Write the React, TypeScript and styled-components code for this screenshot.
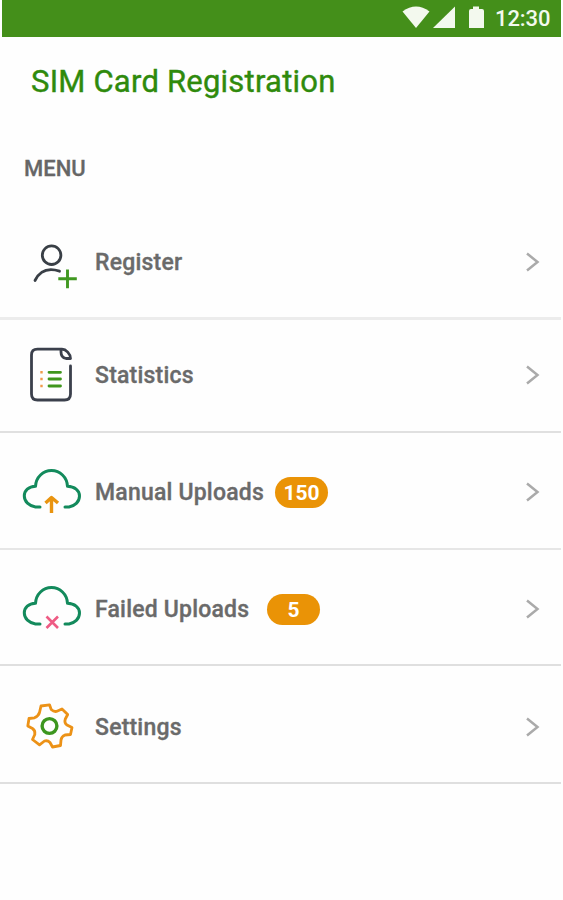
import React from "react";
import styled, { createGlobalStyle } from "styled-components";

const GlobalStyle = createGlobalStyle`
  * { box-sizing: border-box; }
  body { margin: 0; background: #fefefe; font-family: Roboto, "Liberation Sans", sans-serif; }
`;

const Screen = styled.main`
  width: 563px;
  height: 900px;
  display: flex;
  flex-direction: column;
  overflow: hidden;
`;

const StatusBar = styled.header`
  height: 37px;
  flex: none;
  margin: 0 2px;
  padding-right: 10px;
  background: #448f1a;
  display: flex;
  align-items: center;
  justify-content: flex-end;
`;

const StatusIcons = styled.svg`
  width: 96px;
  height: 37px;
  fill: #f3f9ee;
`;

const Clock = styled.span`
  width: 56px;
  color: #f3f9ee;
  font-size: 22px;
  font-weight: 500;
  line-height: 36px;
  letter-spacing: -0.1px;
  white-space: nowrap;
`;

const Title = styled.h1`
  margin: 26px 0 0 31px;
  height: 38px;
  line-height: 38px;
  font-size: 31px;
  font-weight: 400;
  letter-spacing: 0.22px;
  color: #2f8a0c;
  white-space: nowrap;
  -webkit-text-stroke: 0.4px #2f8a0c;
`;

const Section = styled.h2`
  margin: 54px 0 0 24px;
  height: 28px;
  line-height: 28px;
  font-size: 22px;
  font-weight: 500;
  color: #666;
  -webkit-text-stroke: 0.3px #666;
`;

const Menu = styled.nav`
  margin-top: 22px;
  width: 561px;
  display: flex;
  flex-direction: column;
`;

const Row = styled.a<{ $height: number; $top: number; $line: number; $tone: string }>`
  height: ${(p) => p.$height}px;
  padding: ${(p) => p.$top}px 20px 0;
  border-bottom: ${(p) => p.$line}px solid ${(p) => p.$tone};
  display: flex;
  align-items: flex-start;
`;

const RowIcon = styled.svg`
  width: 64px;
  height: 64px;
  margin-right: 11px;
  flex: none;
  fill: none;
  stroke-linecap: round;
  stroke-linejoin: round;
`;

const Label = styled.span<{ $width: number }>`
  width: ${(p) => p.$width}px;
  line-height: 65px;
  font-size: 23px;
  font-weight: 500;
  letter-spacing: 0.2px;
  color: #6a6a6a;
  white-space: nowrap;
  -webkit-text-stroke: 0.35px #6a6a6a;
`;

const Badge = styled.span`
  width: 53px;
  height: 31px;
  margin-top: 17px;
  border-radius: 16px;
  background: #ea9306;
  color: #fff;
  font-size: 21px;
  font-weight: 700;
  line-height: 32px;
  text-align: center;
`;

const Chevron = styled.svg`
  width: 16px;
  height: 64px;
  margin-left: auto;
  fill: none;
  stroke: #aaa;
  stroke-width: 2.5;
`;

const Cloud = () => (
  <path
    stroke="#138a5c"
    strokeWidth="3"
    d="M20 47H15.5C9 46 4.300 41.500 4.300 36C4.300 30.500 8.500 26.500 15.500 26.300C16 17 23 10.600 31.500 10.600C40 10.600 47 17 47.500 26.300C54.500 26.500 59.500 30.500 59.500 36C59.500 42 54.500 46 49 47H45"
  />
);

const RegisterIcon = () => (
  <RowIcon viewBox="0 0 64 64">
    <g stroke="#393f46" strokeWidth="2.8">
      <circle cx="31.600" cy="25.200" r="9.300" />
      <path d="M15 50.500C20 40.500 29 37.800 39.500 41.200" />
    </g>
    <path stroke="#409820" strokeWidth="2.9" strokeLinecap="butt" d="M38.300 48.800H56.800M47.500 39.500V58.300" />
  </RowIcon>
);

const StatisticsIcon = () => (
  <RowIcon viewBox="0 0 64 64">
    <path
      stroke="#3b404c"
      strokeWidth="2.8"
      d="M50.500 23V51Q50.500 57 44.500 57H17.500Q11.500 57 11.500 51V12Q11.500 6.200 17.500 6.200H42C46 6.200 50.500 11 50.500 15.500H46Q41 14.500 41 9V6.500"
    />
    <path stroke="#3f961c" strokeWidth="2.8" d="M29 29.300H40.500M29 36H40.500M29 43H40.500" />
    <path stroke="#f09a4a" strokeWidth="2.400" strokeLinecap="butt" d="M20.300 29.300H22.700M20.300 36H22.700M20.300 43H22.700" />
  </RowIcon>
);

const UploadIcon = () => (
  <RowIcon viewBox="0 0 64 64">
    <Cloud />
    <path stroke="#e99410" strokeWidth="3.4" strokeLinecap="butt" d="M31.500 53V38M25.500 43L31.500 37.500L38 43" />
  </RowIcon>
);

const FailedIcon = () => (
  <RowIcon viewBox="0 0 64 64">
    <Cloud />
    <path stroke="#ee5b84" strokeWidth="2.6" strokeLinecap="butt" d="M26.500 39.500L38 51M38 39.500L26.500 51" />
  </RowIcon>
);

const SettingsIcon = () => (
  <RowIcon viewBox="0 0 64 64">
    <path
      stroke="#ec9217"
      strokeWidth="2.8"
      d="M21 11L29.500 9.800L31.200 14.500Q34.500 17.500 37.500 16L42 14L47.700 19.500L45.300 24Q44 28 47 30L52 32.500L50.500 39.500L45 40Q41.500 41.500 41 45L40.500 50.500L32.500 52L30 47.500Q27.500 45 24.500 46L19.500 49.800L12.500 44.500L14.800 39.500Q15.500 35.500 12.500 33.500L7.800 31L9 23.500L14.500 22.800Q18.500 21 19.500 17.500Z"
    />
    <circle cx="29.500" cy="31" r="7.400" stroke="#3d961f" strokeWidth="3.4" />
  </RowIcon>
);

type Item = {
  label: string;
  Icon: () => React.JSX.Element;
  height: number;
  top: number;
  line: number;
  tone: string;
  width: number;
  count?: number;
};

const items: Item[] = [
  { label: "Register", Icon: RegisterIcon, height: 115, top: 25, line: 3, tone: "#ececec", width: 180 },
  { label: "Statistics", Icon: StatisticsIcon, height: 113, top: 23, line: 2, tone: "#e0e0e0", width: 180 },
  { label: "Manual Uploads", Icon: UploadIcon, height: 117, top: 27, line: 2, tone: "#e6e6e6", width: 180, count: 150 },
  { label: "Failed Uploads", Icon: FailedIcon, height: 116, top: 27, line: 2, tone: "#dfdfdf", width: 172, count: 5 },
  { label: "Settings", Icon: SettingsIcon, height: 118, top: 29, line: 2, tone: "#dfdfdf", width: 180 },
];

export default function App() {
  return (
    <Screen>
      <GlobalStyle />
      <StatusBar>
        <StatusIcons viewBox="399 0 96 37">
          <path d="M402.500 11.500Q416 1.500 429.500 11.500L416 28Z" />
          <path d="M455 6.500V28H433Z" />
          <path d="M473 6.500H479V9H482Q484 9 484 11V28H469V11Q469 9 471 9H473Z" />
        </StatusIcons>
        <Clock>12:30</Clock>
      </StatusBar>
      <Title>SIM Card Registration</Title>
      <Section>MENU</Section>
      <Menu>
        {items.map(({ label, Icon, height, top, line, tone, width, count }) => (
          <Row key={label} $height={height} $top={top} $line={line} $tone={tone}>
            <Icon />
            <Label $width={width}>{label}</Label>
            {count !== undefined && <Badge>{count}</Badge>}
            <Chevron viewBox="0 0 16 64">
              <path d="M2 23.500L12.500 32L2 40.500" />
            </Chevron>
          </Row>
        ))}
      </Menu>
    </Screen>
  );
}
